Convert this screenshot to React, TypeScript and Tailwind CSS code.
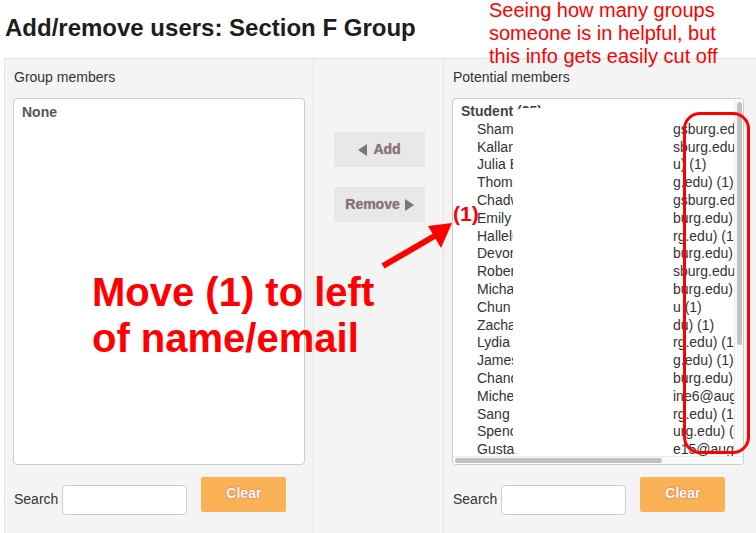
import React from 'react';

const students: [string, string][] = [
  ['Shamsa Ahmed', 'gsburg.edu) (1)'],
  ['Kallan Berg', 'sburg.edu) (1)'],
  ['Julia Brandt', 'u) (1)'],
  ['Thomas Carlson', 'g.edu) (1)'],
  ['Chadwick Dahl', 'gsburg.edu) (1)'],
  ['Emily Erickson', 'burg.edu) (1)'],
  ['Halleluja Fisher', 'rg.edu) (1)'],
  ['Devon Garcia', 'burg.edu) (1)'],
  ['Robert Hanson', 'sburg.edu) (1)'],
  ['Michael Iverson', 'burg.edu) (1)'],
  ['Chun Jiang', 'u (1)'],
  ['Zachary Klein', 'du) (1)'],
  ['Lydia Larson', 'rg.edu) (1)'],
  ['James Moore', 'g.edu) (1)'],
  ['Chandler Nash', 'burg.edu) (1)'],
  ['Michelle Olson', 'ine6@augsburg.edu) (1)'],
  ['Sang Park', 'rg.edu) (1)'],
  ['Spencer Quist', 'urg.edu) (1)'],
  ['Gustavo Ruiz', 'e15@augsburg.edu) (1)'],
];

const Arrow = ({ dir }: { dir: 'left' | 'right' }) => (
  <svg width="9" height="12" viewBox="0 0 9 12" className="shrink-0">
    {dir === 'left' ? <path d="M9 0 L0 6 L9 12 Z" fill="#777" /> : <path d="M0 0 L9 6 L0 12 Z" fill="#777" />}
  </svg>
);

const SearchRow = () => (
  <div className="flex items-start mt-[12px]">
    <div className="flex items-center mt-[8px]">
      <span className="text-[14px] text-[#333] pl-[1px] pb-[2px]">Search</span>
      <input className="ml-[4px] w-[125px] h-[30px] bg-white border border-[#ccc] rounded-[4px] outline-none" />
    </div>
    <button className="ml-[14px] w-[85px] h-[35px] bg-[#fbb257] rounded-[2px] text-white font-bold text-[14px] pb-[3px] [text-shadow:0_0_2px_rgba(210,40,80,0.7)]">
      Clear
    </button>
  </div>
);

export default function App() {
  return (
    <div className="relative w-[756px] h-[533px] overflow-hidden bg-white font-['Liberation_Sans',Arial,sans-serif]">
      <h1 className="pl-[5px] pt-[14px] pb-[16px] text-[24px] leading-[28px] font-bold text-[#1d1d1d]">
        Add/remove users: Section F Group
      </h1>

      {/* Panel */}
      <div className="ml-[4px] h-[475px] flex bg-[#f4f4f4] border-l border-t border-[#e4e4e4]">
        {/* Group members */}
        <div className="w-[309px] border-r border-[#e6e6e6] pl-[8px] pt-[10px]">
          <div className="text-[14px] leading-[17px] text-[#333] pl-[1px] mb-[12px]">Group members</div>
          <div className="w-[292px] h-[367px] bg-white border border-[#ccc] rounded-[4px] px-[8px] pt-[4px]">
            <div className="text-[14px] leading-[18px] font-bold text-[#555]">None</div>
          </div>
          <SearchRow />
        </div>

        {/* Buttons */}
        <div className="w-[130px] border-r border-[#e6e6e6] pt-[73px] pl-[20px] flex flex-col gap-[20px]">
          <button className="w-[91px] h-[35px] bg-[#e8e8e8] flex items-center justify-center gap-[6px] text-[14px] font-bold text-[#777] [text-shadow:0_0_1px_rgba(220,60,110,0.6)]">
            <Arrow dir="left" />
            Add
          </button>
          <button className="w-[91px] h-[35px] bg-[#e8e8e8] flex items-center justify-center gap-[5px] text-[14px] font-bold text-[#777] [text-shadow:0_0_1px_rgba(220,60,110,0.6)]">
            Remove
            <Arrow dir="right" />
          </button>
        </div>

        {/* Potential members */}
        <div className="flex-1 pl-[8px] pt-[10px]">
          <div className="text-[14px] leading-[17px] text-[#333] pl-[1px] mb-[12px]">Potential members</div>
          <div className="relative w-[292px] h-[367px] bg-white border border-[#ccc] rounded-[4px] flex flex-col overflow-hidden">
            <div className="flex h-[357px]">
              <div className="flex-1 min-w-0 overflow-hidden pt-[4px] text-[14px] leading-[17.8px] text-[#333]">
                <div className="pl-[8px] font-bold text-[#444] whitespace-nowrap">Student (25)</div>
                {students.map(([name, tail]) => (
                  <div key={name} className="flex pl-[24px] whitespace-nowrap">
                    <div className="w-[196px] shrink-0 overflow-hidden">{name}</div>
                    <div className="min-w-0 overflow-hidden">{tail}</div>
                  </div>
                ))}
              </div>
              <div className="w-[9px] shrink-0 bg-[#fafafa] border-l border-[#ececec] pt-[3px]">
                <div className="ml-[2px] w-[5px] h-[243px] rounded-full bg-[#c1c1c1]" />
              </div>
            </div>
            <div className="h-[8px] bg-[#fafafa] border-t border-[#ececec]">
              <div className="ml-[2px] mt-[1px] w-[207px] h-[5px] rounded-full bg-[#c1c1c1]" />
            </div>
            {/* redaction */}
            <div className="absolute left-[60px] top-[9px] w-[160px] h-[348px] bg-white rounded-[10px]" />
          </div>
          <SearchRow />
        </div>
      </div>

      {/* Annotations */}
      <div className="absolute left-[489px] top-[-1px] text-[20px] leading-[23px] text-[#ff0000]">
        Seeing how many groups
        <br />
        someone is in helpful, but
        <br />
        this info gets easily cut off
      </div>
      <div className="absolute left-[683px] top-[112px] w-[67px] h-[342px] border-[3px] border-[#ff0000] rounded-[17px]" />
      <div className="absolute left-[453px] top-[202px] text-[21px] leading-[24px] font-bold text-[#ff0000]">(1)</div>
      <svg className="absolute left-0 top-0 pointer-events-none" width="756" height="533">
        <line x1="383" y1="266" x2="438" y2="234" stroke="#ff0000" strokeWidth="6" />
        <polygon points="452,223 428,226 441,248" fill="#ff0000" />
      </svg>
      <div className="absolute left-[92px] top-[269px] text-[40px] leading-[46px] font-bold text-[#ff0000]">
        Move (1) to left
        <br />
        of name/email
      </div>
    </div>
  );
}
